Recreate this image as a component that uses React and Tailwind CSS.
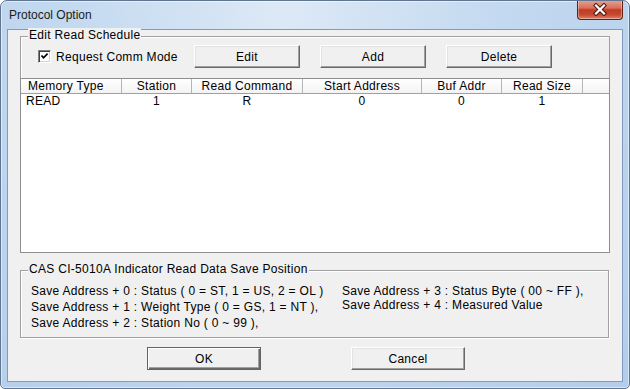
import React from 'react';

const columns = [
    { label: 'Memory Type', value: 'READ', w: 'w-[101px]', head: 'justify-start pl-[7px]', cell: 'justify-start pl-[5px]' },
    { label: 'Station', value: '1', w: 'w-[70px]', head: 'justify-center', cell: 'justify-center' },
    { label: 'Read Command', value: 'R', w: 'w-[111px]', head: 'justify-center', cell: 'justify-center' },
    { label: 'Start Address', value: '0', w: 'w-[119px]', head: 'justify-center', cell: 'justify-center' },
    { label: 'Buf Addr', value: '0', w: 'w-[80px]', head: 'justify-center', cell: 'justify-center' },
    { label: 'Read Size', value: '1', w: 'w-[81px]', head: 'justify-center', cell: 'justify-center' }
];

const leftLines = [
    'Save Address + 0 : Status ( 0 = ST, 1 = US, 2 = OL )',
    'Save Address + 1 : Weight Type ( 0 = GS, 1 = NT ),',
    'Save Address + 2 : Station No ( 0 ~ 99 ),'
];

const rightLines = [
    'Save Address + 3 : Status Byte ( 00 ~ FF ),',
    'Save Address + 4 : Measured Value'
];

const Button = ({ children, isDefault }) => (
    <div
        className={
            isDefault
                ? 'w-[114px] h-[23px] flex items-center justify-center bg-[#f0f0f0] border border-[#646464] shadow-[inset_1px_1px_0_#fff,inset_-1px_-1px_0_#696969,inset_-2px_-2px_0_#a0a0a0]'
                : 'h-[23px] flex items-center justify-center bg-[#f0f0f0] border border-t-white border-l-white border-r-[#696969] border-b-[#696969] shadow-[inset_-1px_-1px_0_#a0a0a0,inset_1px_1px_0_#e3e3e3]'
        }
    >
        {children}
    </div>
);

const App = () => {
    return (
        <div className="w-[630px] h-[389px] flex flex-col px-[6px] relative border border-[#5f7590] rounded-t-[7px] rounded-b-[5px] bg-[radial-gradient(ellipse_at_45%_0%,#dde9f6_0%,#c3d9f0_45%,#b3cdea_100%)] shadow-[inset_0_0_0_1px_rgba(255,255,255,0.5)] font-['Liberation_Sans',Arial,sans-serif] text-[12px] text-black tracking-[0.3px] overflow-hidden">
            {/* Title bar */}
            <div className="h-[28px] flex items-center pl-[2px] text-[12px] text-[#1b1b1b] tracking-normal">Protocol Option</div>

            {/* Close button */}
            <div className="absolute -top-px right-[6px] w-[46px] h-[20px] rounded-b-[4px] border border-t-0 border-[#5e2219] bg-[linear-gradient(to_bottom,#e9a493_0%,#d6705b_42%,#c23a22_52%,#c44a33_78%,#de8468_100%)] shadow-[inset_0_0_0_1px_rgba(255,255,255,0.35)] flex items-center justify-center">
                <svg width="16" height="13" viewBox="0 0 16 13">
                    <path d="M4 2.5 L12 10.5 M12 2.5 L4 10.5" stroke="#4a1810" strokeWidth="4.2" strokeLinecap="square" />
                    <path d="M4 2.5 L12 10.5 M12 2.5 L4 10.5" stroke="#ffffff" strokeWidth="2.2" strokeLinecap="square" />
                </svg>
            </div>

            {/* Client area */}
            <div className="flex-1 flex flex-col bg-[#f0f0f0] border border-[#7f9cc0] px-[12px] pt-[6px]">
                {/* Edit Read Schedule */}
                <div className="relative w-[590px] border-t border-l border-r border-[#a0a0a0] shadow-[inset_1px_1px_0_#fff] pt-[8px]">
                    <div className="absolute left-[7px] -top-[9px] px-[1px] leading-[14px] bg-[#f0f0f0]">Edit Read Schedule</div>
                    <div className="flex items-center h-[23px] pl-[17px]">
                        <div className="w-[156px] flex items-center gap-[5px]">
                            <div className="w-[13px] h-[13px] bg-white border border-t-[#808080] border-l-[#808080] border-b-white border-r-white shadow-[inset_1px_1px_0_#404040,inset_-1px_-1px_0_#d4d0c8] flex items-center justify-center">
                                <svg width="9" height="9" viewBox="0 0 9 9">
                                    <path d="M1.5 3.5 L3.5 5.8 L7.6 1.6" stroke="#000" strokeWidth="1.7" fill="none" />
                                </svg>
                            </div>
                            <span className="leading-[14px]">Request Comm Mode</span>
                        </div>
                        <div className="flex gap-[20px]">
                            <div className="w-[106px]"><Button>Edit</Button></div>
                            <div className="w-[106px]"><Button>Add</Button></div>
                            <div className="w-[106px]"><Button>Delete</Button></div>
                        </div>
                    </div>

                    {/* List view */}
                    <div className="-mx-px mt-[10px] h-[175px] bg-white border border-[#8e8f8f]">
                        <div className="flex h-[15px] border-b border-[#a0a0a0] bg-[linear-gradient(to_bottom,#ffffff,#f3f3f3)]">
                            {columns.map((col) => (
                                <div key={col.label} className={`${col.w} ${col.head} flex items-center border-r border-[#b5b5b5] leading-[14px]`}>
                                    {col.label}
                                </div>
                            ))}
                        </div>
                        <div className="flex h-[14px]">
                            {columns.map((col) => (
                                <div key={col.label} className={`${col.w} ${col.cell} flex items-center pr-px leading-[14px]`}>
                                    {col.value}
                                </div>
                            ))}
                        </div>
                    </div>
                </div>

                {/* Save position */}
                <div className="relative mt-[17px] w-[589px] h-[68px] border border-[#a0a0a0] shadow-[inset_1px_1px_0_#fff,1px_1px_0_#fff] pt-[12px] pl-[10px] flex">
                    <div className="absolute left-[7px] -top-[9px] px-[1px] leading-[14px] bg-[#f0f0f0]">CAS CI-5010A Indicator Read Data Save Position</div>
                    <div className="w-[311px] flex flex-col leading-[16px]">
                        {leftLines.map((line) => (
                            <div key={line} className="whitespace-nowrap">{line}</div>
                        ))}
                    </div>
                    <div className="flex flex-col leading-[14px] pt-[1px]">
                        {rightLines.map((line) => (
                            <div key={line} className="whitespace-nowrap">{line}</div>
                        ))}
                    </div>
                </div>

                {/* Dialog buttons */}
                <div className="flex mt-[9px] pl-[127px] gap-[90px]">
                    <Button isDefault>OK</Button>
                    <div className="w-[114px]"><Button>Cancel</Button></div>
                </div>
            </div>
            <div className="h-[6px]" />
        </div>
    );
};

export default App;
